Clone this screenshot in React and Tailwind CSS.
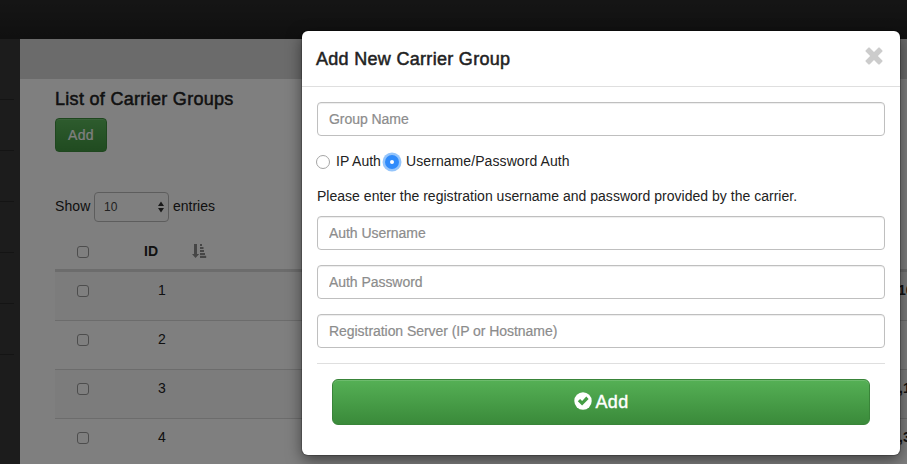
import React from "react";

const rows = [
  { id: 1, tail: "10", tailClass: "ml-[-2px]" },
  { id: 2, tail: "", tailClass: "" },
  { id: 3, tail: ",1", tailClass: "" },
  { id: 4, tail: ",3", tailClass: "" },
];

function CheckBox() {
  return <span className="block size-3 rounded-[3px] border border-[#9a9a9a] bg-white" />;
}

function SortIcon() {
  return (
    <svg className="block h-[14px] w-[15px]" viewBox="0 0 15 14" fill="#8c8c8c">
      <path d="M2 0h3v10h2.200L3.500 14 0 10h2zM8 0h2v2H8zM8 3h3.500v2H8zM8 6h4v2H8zM8 9h5v2H8zM8 11.700h6.200V14H8z" />
    </svg>
  );
}

function CloseIcon() {
  return (
    <svg className="block size-[18px]" viewBox="0 0 18 18" fill="#ccc">
      <path d="M4.500.600 9 5.100 13.500.600q.5-.4 1 0l2.900 2.900q.4.500 0 1L12.900 9l4.500 4.500q.4.500 0 1l-2.900 2.900q-.5.400-1 0L9 12.900l-4.500 4.500q-.5.400-1 0L.600 14.500q-.4-.5 0-1L5.100 9 .600 4.500q-.4-.5 0-1L3.500.600q.5-.4 1 0z" />
    </svg>
  );
}

function OkIcon() {
  return (
    <svg className="block size-[18px]" viewBox="0 0 18 18">
      <circle cx="9" cy="9" r="8.700" fill="#fff" />
      <path d="M3.800 9.300 6.100 7l2 1.900 4.200-4.300 2.300 2.300-6.500 6.700z" fill="#449d44" />
    </svg>
  );
}

function Field({ placeholder }) {
  return (
    <input
      placeholder={placeholder}
      className="block h-[34px] w-full rounded border border-[#bfbfbf] bg-white px-[11px] text-sm tracking-[-0.05px] shadow-[inset_0_1px_1px_rgba(0,0,0,0.075)] outline-none [-webkit-text-stroke:0.2px_#8c8c8c] placeholder:text-[#8c8c8c]"
    />
  );
}

function Page() {
  return (
    <div className="flex h-full flex-col">
      <div className="h-[39px] shrink-0 bg-linear-to-b from-[#2b2b2b] to-[#202020]" />
      <div className="flex min-h-0 flex-1">
        <div className="w-5 shrink-0 bg-[#383838] pt-[10px]">
          {[0, 1, 2, 3, 4, 5].map((n) => (
            <div key={n} className="h-[51px] w-[14px] border-b border-[#282828]" />
          ))}
        </div>
        <div className="flex min-w-0 flex-1 flex-col bg-white">
          <div className="h-10 shrink-0 bg-[#d7d7d7]" />
          <div className="pl-[35px]">
            <h4 className="h-[39px] pt-[10px] text-[18px] leading-[20px] tracking-[0.3px] [-webkit-text-stroke:0.5px_#222]">
              List of Carrier Groups
            </h4>
            <button className="block h-[34px] w-[52px] rounded border border-[#3e8f3e] bg-linear-to-b from-[#5cb85c] to-[#419641] text-sm tracking-[0.3px] text-white shadow-[inset_0_1px_0_rgba(255,255,255,0.15)] [-webkit-text-stroke:0.2px_#fff]">
              Add
            </button>
            <div className="mt-10 flex h-[30px] items-center text-sm">
              <span className="w-[39px] pb-[2px] tracking-[0.1px]">Show</span>
              <div className="flex h-[30px] w-[75px] items-center justify-between rounded border border-[#bbb] pr-1 pl-[9px] text-xs text-[#444]">
                10
                <svg className="h-3 w-[6px]" viewBox="0 0 6 12" fill="#333">
                  <path d="M0 5 3 0.500 6 5zM0 7h6L3 11.500z" />
                </svg>
              </div>
              <span className="ml-1 pb-[2px]">entries</span>
            </div>
            <div className="flex h-[49px] items-center border-b-2 border-[#d8d8d8] pt-[11px] text-sm font-bold">
              <div className="w-[89px] pt-px pl-[22px]"><CheckBox /></div>
              <div className="w-12">ID</div>
              <SortIcon />
            </div>
          </div>
          <div className="pl-[35px]">
            {rows.map((r) => (
              <div
                key={r.id}
                className="flex h-[49px] border-t border-[#d8d8d8] pt-[8px] text-sm leading-5 odd:bg-[#f9f9f9] even:bg-white"
              >
                <div className="w-[103px] pt-[5px] pl-[22px]"><CheckBox /></div>
                <div className="w-[742px]">{r.id}</div>
                <div className={`w-2 overflow-visible font-bold whitespace-nowrap ${r.tailClass}`}>{r.tail}</div>
              </div>
            ))}
          </div>
        </div>
      </div>
    </div>
  );
}

function Modal() {
  return (
    <div className="absolute top-[31px] left-[302px] h-[424px] w-[598px] rounded-md bg-white shadow-[0_5px_15px_rgba(0,0,0,0.5),0_0_0_1px_rgba(0,0,0,0.2)]">
      <div className="flex h-14 items-center justify-between border-b border-[#dfdfdf] pr-[17px] pl-[14px]">
        <h4 className="text-[18px] leading-5 tracking-[0.3px] [-webkit-text-stroke:0.5px_#222]">Add New Carrier Group</h4>
        <div className="mb-[6px]"><CloseIcon /></div>
      </div>
      <div className="px-[15px] pt-[15px] text-sm leading-5">
        <Field placeholder="Group Name" />
        <div className="mt-[15px] flex h-5 items-center">
          <span className="mt-px ml-[-1px] size-[14px] rounded-full border border-[#a5a5a5] bg-white" />
          <span className="ml-[6px] w-[49px] whitespace-nowrap">IP Auth</span>
          <span className="mt-px flex size-[14px] items-center justify-center rounded-full bg-[#2f8bfb] shadow-[0_0_0_2.500px_#95c5fb]">
            <span className="size-1 rounded-full bg-white" />
          </span>
          <span className="ml-[7px] tracking-[0.08px]">Username/Password Auth</span>
        </div>
        <p className="mt-[15px] mb-[10px] tracking-[0.02px]">Please enter the registration username and password provided by the carrier.</p>
        <div className="flex flex-col gap-[15px]">
          <Field placeholder="Auth Username" />
          <Field placeholder="Auth Password" />
          <Field placeholder="Registration Server (IP or Hostname)" />
        </div>
        <div className="mt-[15px] border-t border-[#dfdfdf] px-[15px] pt-[15px]">
          <button className="flex h-[46px] w-full items-center justify-center gap-1 rounded-md border border-[#398439] bg-linear-to-b from-[#55b055] to-[#3a8a3a] text-[18px] tracking-[0.3px] text-white shadow-[inset_0_1px_0_rgba(255,255,255,0.15)] [-webkit-text-stroke:0.4px_#fff]">
            <span className="mb-[3px]"><OkIcon /></span>
            Add
          </button>
        </div>
      </div>
    </div>
  );
}

export default function App() {
  return (
    <div className="relative h-[464px] w-[907px] overflow-hidden font-['Liberation_Sans',Arial,sans-serif] text-[#222]">
      <Page />
      <div className="absolute inset-0 bg-black/50" />
      <Modal />
    </div>
  );
}
